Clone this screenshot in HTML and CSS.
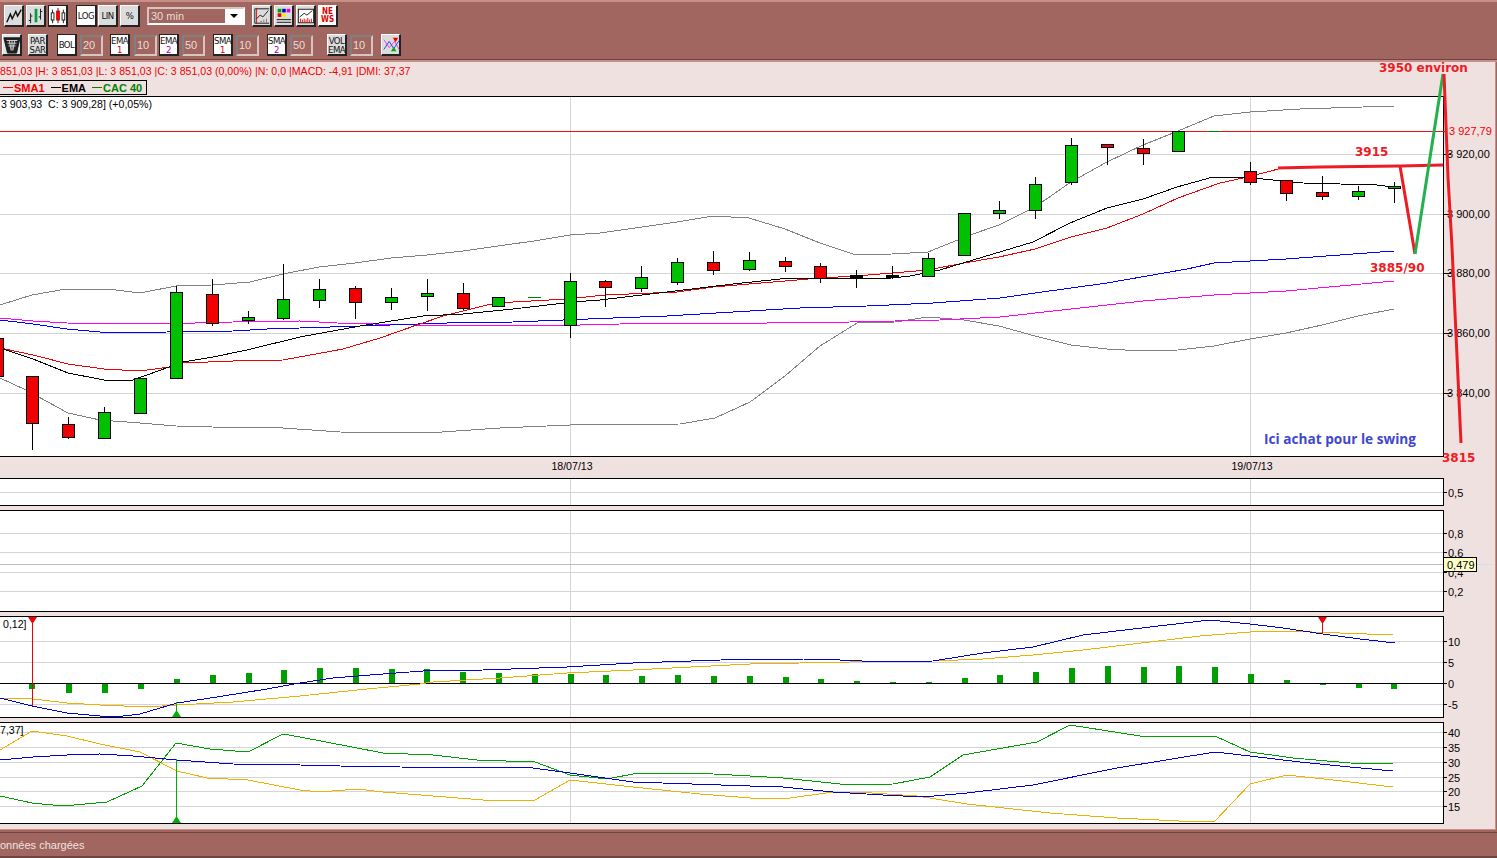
FILE: index.html
```html
<!DOCTYPE html>
<html lang="fr">
<head>
    <meta charset="UTF-8">
    <title>Graphique CAC 40</title>
    <link rel="stylesheet" href="styles.css">
</head>
<body>
    <div class="toolbar">
        <div class="tool-row">
            <button class="btn"><svg viewBox="0 0 20 20"><path d="M2 17 L6 8 L8 13 L12 5 L14 10 L18 3" class="ic-line"/></svg></button>
            <button class="btn g2"><svg viewBox="0 0 20 20"><path d="M4 7V18M2 15H4M4 10H6M15 2V14M13 11H15M15 5H17" class="ic-dark"/><path d="M10 2V17" class="ic-green"/></svg></button>
            <button class="btn on g2"><svg viewBox="0 0 20 20"><path d="M4 3V18M10 1V18M16 3V18" class="ic-dark"/><rect x="2.5" y="6.5" width="3" height="8" fill="#fff" stroke="#111"/><rect x="8.5" y="4.5" width="3" height="10" fill="#f00" stroke="#c00"/><rect x="14.5" y="6.5" width="3" height="8" fill="#fff" stroke="#111"/></svg></button>
            <button class="btn on wide g8">LOG</button>
            <button class="btn g1">LIN</button>
            <button class="btn g2">%</button>
            <div class="select">
                <span class="select-text">30 min</span>
                <span class="select-arrow"></span>
            </div>
            <button class="btn g7"><svg viewBox="0 0 20 20"><path d="M2 2H18M2 18H18M2 2V18" class="ic-dark"/><path d="M4 1V19" class="ic-red"/><path d="M4 13L8 9L11 11L17 4" class="ic-dark"/><path d="M8 16H10M12 14V17M15 13V17" class="ic-gray"/></svg></button>
            <button class="btn g2"><svg viewBox="0 0 20 20"><rect x="3" y="2" width="4" height="4" fill="#00a000"/><rect x="8" y="2" width="4" height="4" fill="#0000e0"/><rect x="13" y="2" width="4" height="4" fill="#e000e0"/><rect x="3" y="7" width="4" height="4" fill="#e00000"/><rect x="8" y="7" width="4" height="4" fill="#f0f000"/><rect x="13" y="7" width="4" height="4" fill="#e0e0e0"/><path d="M2 14H18M2 17H18" class="ic-dark"/></svg></button>
            <button class="btn g2"><svg viewBox="0 0 20 20"><rect x="1.5" y="2.5" width="17" height="15" fill="#fff" stroke="#111"/><path d="M3 11L8 7L11 9L17 4" class="ic-dark"/><path d="M4 17V13M6 17V14M8 17V13M10 17V14M12 17V12M14 17V14M16 17V13" class="ic-red"/></svg></button>
            <button class="btn news g2"><span>NE</span><span>WS</span></button>
        </div>
        <div class="tool-row second">
            <button class="btn trash"><svg viewBox="0 0 20 20"><path d="M1 2H19L15 19H5Z" fill="#222" stroke="#111"/><path d="M4 5H16M5 8H15M6 11H14M7 5L9 16M13 5L11 16M10 5V16" stroke="#ddd" fill="none"/></svg></button>
            <button class="btn two g6">PAR<br>SAR</button>
            <button class="btn on g9">BOL</button>
            <span class="num">20</span>
            <button class="btn on two g7">EMA<br><b class="red">1</b></button>
            <span class="num n4">10</span>
            <button class="btn on two g2">EMA<br><b class="violet">2</b></button>
            <span class="num">50</span>
            <button class="btn on two g8">SMA<br><b class="red">1</b></button>
            <span class="num">10</span>
            <button class="btn on two g8">SMA<br><b class="violet">2</b></button>
            <span class="num">50</span>
            <button class="btn two g14">VOL<br>EMA</button>
            <span class="num">10</span>
            <button class="btn g8"><svg viewBox="0 0 20 20"><path d="M2 4L8 13L14 6L19 15" class="ic-pink"/><path d="M2 15L8 6L13 14L19 5" class="ic-blue"/><path d="M10 17L13 12L16 17Z" fill="#0a0"/><path d="M12 2H18L15 7Z" fill="#e00"/></svg></button>
        </div>
    </div>

    <div class="main">
        <div class="info-line">851,03 |H: 3 851,03 |L: 3 851,03 |C: 3 851,03 (0,00%) |N: 0,0 |MACD: -4,91 |DMI: 37,37</div>
        <div class="legend">
            <span class="leg sma"><i></i>SMA1</span>
            <span class="leg ema"><i></i>EMA</span>
            <span class="leg cac"><i></i>CAC 40</span>
        </div>
        <div class="chart-wrap">
            <svg id="chart" width="1495" height="768" viewBox="0 62 1495 768"></svg>
        </div>
    </div>

    <div class="status">onnées chargées</div>

    <script src="chart.js"></script>
</body>
</html>
```

FILE: styles.css
```css
* {
    box-sizing: border-box;
}

body {
    margin: 0;
    width: 1497px;
    height: 858px;
    overflow: hidden;
    background-color: #a0665f;
    font-family: 'Liberation Sans', Arial, sans-serif;
    font-size: 11px;
    color: #000;
}

/* toolbars */
.toolbar {
    height: 62px;
    padding-top: 3px;
    background-color: #a0665f;
    border-top: 2px solid #c88f88;
    border-bottom: 2px solid #c88f88;
    box-shadow: inset 0 -1px 0 #6e4540;
}

.tool-row {
    display: flex;
    align-items: center;
    height: 22px;
    padding-left: 4px;
}

.tool-row.second {
    margin-top: 7px;
    padding-left: 2px;
}

.btn {
    width: 20px;
    height: 22px;
    margin: 0;
    padding: 0;
    flex: none;
    display: flex;
    flex-direction: column;
    align-items: center;
    justify-content: center;
    background-color: #dcdcdc;
    border: 1px solid #fff;
    border-right: 2px solid #222;
    border-bottom: 2px solid #222;
    font-family: 'DejaVu Sans', sans-serif;
    font-stretch: condensed;
    font-size: 9.5px;
    letter-spacing: -0.5px;
    line-height: 9px;
    color: #111;
}

.btn svg {
    width: 18px;
    height: 18px;
    flex: none;
}

.btn.on {
    background-color: #fff;
    border-top-color: #222;
    border-left-color: #222;
}

.btn.wide {
    width: 21px;
}

.btn.two {
    display: block;
    line-height: 9px;
    text-align: center;
}

.btn.two b {
    font-weight: normal;
    font-size: 9.5px;
    line-height: 8px;
}

.btn.news {
    color: #e00000;
    background-color: #fff;
    font-weight: bold;
    font-size: 8px;
    letter-spacing: 0;
    line-height: 8px;
}

.btn.trash {
    background-color: #e4e4e4;
}

.red {
    color: #e00000;
}

.violet {
    color: #a000c0;
}

.g1 { margin-left: 1px; }
.g2 { margin-left: 2px; }
.g6 { margin-left: 6px; }
.g7 { margin-left: 7px; }
.g8 { margin-left: 8px; }
.g9 { margin-left: 9px; }
.g14 { margin-left: 14px; }

.num {
    width: 23px;
    height: 21px;
    margin-left: 3px;
    padding-left: 1px;
    flex: none;
    border: 2px solid #d8c4c0;
    border-top-color: #808080;
    border-left-color: #808080;
    color: #e8dcd8;
    font-size: 11px;
    line-height: 17px;
}

.num.n4 {
    margin-left: 4px;
}

.select {
    display: flex;
    align-items: center;
    width: 98px;
    height: 18px;
    margin-left: 7px;
    flex: none;
    border: 2px solid #fff;
    border-top-color: #d8c4c0;
    border-left-color: #d8c4c0;
    color: #e8dcd8;
}

.select-text {
    flex: 1;
    padding-left: 2px;
    font-size: 11px;
}

.select-arrow {
    position: relative;
    width: 18px;
    height: 14px;
    background-color: #fff;
}

.select-arrow::after {
    content: '';
    position: absolute;
    left: 5px;
    top: 5px;
    border-left: 4px solid transparent;
    border-right: 4px solid transparent;
    border-top: 4px solid #000;
}

.ic-line, .ic-dark, .ic-green, .ic-red, .ic-gray, .ic-pink, .ic-blue {
    fill: none;
    stroke-width: 1;
}

.ic-line { stroke: #111; stroke-width: 1.6; }
.ic-dark { stroke: #111; }
.ic-green { stroke: #00a040; stroke-width: 3; }
.ic-red { stroke: #e00000; }
.ic-gray { stroke: #777; }
.ic-pink { stroke: #e040e0; }
.ic-blue { stroke: #2040d0; }

/* chart area */
.main {
    position: relative;
    width: 1496px;
    height: 768px;
    background-color: #f0e1e1;
    border-right: 1px solid #c88f88;
    border-bottom: 1px solid #c88f88;
}

.info-line {
    position: absolute;
    left: 0;
    top: 3px;
    color: #f00000;
    font-size: 10.6px;
    line-height: 13px;
    white-space: nowrap;
    z-index: 2;
}

.legend {
    position: absolute;
    left: -1px;
    top: 18px;
    width: 148px;
    height: 15px;
    padding-left: 3px;
    display: flex;
    align-items: center;
    gap: 6px;
    border: 1px solid #000;
    font-size: 11px;
    font-weight: bold;
    white-space: nowrap;
    z-index: 2;
}

.leg {
    display: flex;
    align-items: center;
    gap: 1px;
}

.leg i {
    display: block;
    width: 10px;
    height: 1px;
    background-color: currentColor;
}

.leg.sma { color: #f00000; }
.leg.ema { color: #000; }
.leg.cac { color: #008000; }

.chart-wrap {
    width: 1495px;
    height: 768px;
}

#chart {
    display: block;
}

.status {
    height: 26px;
    margin-top: 2px;
    border-top: 1px solid #6e4540;
    border-bottom: 2px solid #6e4540;
    color: #f0e4e0;
    font-size: 11px;
    line-height: 24px;
}

/* svg text */
.ax {
    font-family: 'Liberation Sans', Arial, sans-serif;
    font-size: 11px;
    fill: #000;
}

.ax-small {
    font-size: 10.6px;
}

.ax-red {
    fill: #f00000;
}

.note {
    font-family: 'DejaVu Sans', Verdana, sans-serif;
    font-weight: bold;
    font-size: 12px;
    fill: #ed1c24;
}

.note-blue {
    font-family: 'Open Sans', sans-serif;
    font-weight: 700;
    font-size: 13.65px;
    fill: #3f48cc;
}
```

FILE: chart.js
```js
// all chart pieces are drawn in page pixels, viewBox starts where the pink area starts
var svg = document.getElementById('chart');
var out = '';

var GRID = '#d4d4d4';
var RIGHT = 1443;

function line(x1, y1, x2, y2, color, w) {
    out += '<line x1="' + x1 + '" y1="' + y1 + '" x2="' + x2 + '" y2="' + y2 + '" stroke="' + color + '" stroke-width="' + (w || 1) + '"/>';
}

function rect(x, y, w, h, fill, stroke) {
    out += '<rect x="' + x + '" y="' + y + '" width="' + w + '" height="' + h + '" fill="' + fill + '"' + (stroke ? ' stroke="' + stroke + '"' : '') + '/>';
}

function poly(points, color, w) {
    var s = points.map(function (p) { return p[0] + ',' + p[1]; }).join(' ');
    out += '<polyline points="' + s + '" fill="none" stroke="' + color + '" stroke-width="' + (w || 1) + '" shape-rendering="' + (w ? 'auto' : 'crispEdges') + '"/>';
}

function text(x, y, str, cls, anchor) {
    out += '<text x="' + x + '" y="' + y + '" class="' + cls + '"' + (anchor ? ' text-anchor="' + anchor + '"' : '') + '>' + str + '</text>';
}

// one panel: white box, grid, vertical date lines, axis ticks + labels
function panel(top, bottom, grid, labels) {
    rect(-2, top + 0.5, RIGHT + 2.5, bottom - top, '#fff', '#000');
    grid.forEach(function (g) { line(0, g + 0.5, RIGHT, g + 0.5, GRID); });
    [570.5, 1250.5].forEach(function (x) { line(x, top + 1, x, bottom, GRID); });
    labels.forEach(function (l) {
        text(1448, l[0] + 4.5, l[1], 'ax');
        line(RIGHT, l[0] + 0.5, 1447, l[0] + 0.5, '#000');
    });
}

// main price chart
panel(96, 456, [154, 214, 273, 333, 393], []);
[[154, '3 920,00'], [214, '3 900,00'], [273, '3 880,00'], [333, '3 860,00'], [393, '3 840,00']].forEach(function (l) {
    text(1447, l[0] + 4, l[1], 'ax');
    line(RIGHT, l[0] + 0.5, 1451, l[0] + 0.5, '#000');
});
line(0, 131.5, RIGHT + 4, 131.5, '#e81010');
text(1449, 135, '3 927,79', 'ax ax-red');
line(1208, 131.5, 1220, 131.5, '#008000');

var bollUp = [[0, 305], [32, 295], [66, 289], [108, 289], [140, 293], [176, 286], [212, 285], [250, 282], [283, 274], [319, 267], [355, 263], [391, 258], [427, 255], [463, 251], [498, 246], [534, 241], [570, 235], [600, 233], [677, 222], [713, 216], [749, 218], [785, 229], [820, 243], [856, 255], [892, 254], [928, 252], [970, 235], [999, 225], [1035, 207], [1071, 182], [1107, 162], [1143, 145], [1178, 131], [1214, 116], [1250, 112], [1300, 109], [1394, 106]];
var bollLow = [[0, 378], [26, 390], [68, 413], [100, 420], [140, 423], [176, 426], [212, 427], [283, 428], [340, 432], [427, 433], [500, 428], [570, 425], [680, 424], [715, 418], [750, 402], [785, 376], [820, 346], [857, 323], [895, 322], [928, 317], [964, 320], [999, 326], [1035, 336], [1071, 345], [1107, 349], [1143, 351], [1178, 350], [1214, 346], [1250, 339], [1286, 333], [1322, 325], [1358, 316], [1394, 309]];
var magenta = [[0, 318], [33, 321], [67, 323], [157, 324], [233, 322], [300, 321], [337, 323], [413, 325], [580, 325], [620, 324], [767, 323], [850, 322], [940, 320], [1000, 317], [1071, 309], [1143, 301], [1214, 295], [1286, 291], [1394, 281]];
var blue = [[0, 320], [33, 324], [67, 329], [100, 332], [133, 333], [167, 332], [233, 331], [267, 329], [300, 328], [390, 325], [447, 323], [513, 322], [563, 320], [613, 318], [667, 316], [733, 312], [800, 308], [867, 306], [933, 303], [1000, 298], [1035, 293], [1107, 283], [1187, 269], [1214, 263], [1286, 259], [1394, 251]];
var sma = [[0, 348], [33, 355], [68, 364], [104, 369], [140, 371], [170, 367], [183, 363], [233, 361], [283, 360], [343, 349], [380, 338], [417, 325], [443, 316], [487, 305], [513, 302], [567, 299], [605, 295], [677, 292], [713, 287], [749, 284], [785, 281], [820, 278], [856, 276], [892, 273], [928, 270], [964, 263], [999, 257], [1035, 249], [1071, 237], [1107, 228], [1143, 214], [1178, 198], [1220, 183], [1243, 178], [1267, 172], [1282, 168]];
var ema = [[0, 348], [33, 359], [68, 373], [104, 380], [133, 380], [183, 362], [213, 357], [247, 350], [300, 337], [360, 326], [423, 316], [463, 314], [513, 309], [573, 302], [600, 300], [667, 292], [733, 284], [780, 279], [893, 278], [910, 276], [940, 270], [963, 263], [1033, 242], [1070, 223], [1107, 208], [1143, 199], [1177, 187], [1213, 177], [1243, 177], [1303, 183], [1340, 184], [1377, 185], [1393, 187]];

poly(bollUp, '#808080');
poly(bollLow, '#808080');
poly(magenta, '#ff00ff');
poly(blue, '#0000ff');
poly(sma, '#f00000');
poly(ema, '#000000');

// x, high, top, bottom, low, color (g/r)
var candles = [
    [-3, 338, 338, 376, 376, 'r'], [32, 376, 376, 423, 450, 'r'], [68, 417, 424, 437, 439, 'r'], [104, 407, 412, 438, 438, 'g'],
    [140, 378, 378, 413, 413, 'g'], [176, 286, 292, 378, 378, 'g'], [212, 279, 294, 323, 326, 'r'], [248, 311, 317, 320, 324, 'g'],
    [283, 264, 299, 318, 320, 'g'], [319, 279, 289, 300, 308, 'g'], [355, 286, 288, 302, 319, 'r'], [391, 288, 297, 302, 310, 'g'],
    [427, 279, 293, 296, 311, 'g'], [463, 283, 293, 308, 310, 'r'], [498, 297, 297, 306, 306, 'g'], [570, 273, 281, 325, 338, 'g'],
    [605, 280, 281, 287, 307, 'r'], [641, 266, 277, 288, 292, 'g'], [677, 258, 262, 282, 285, 'g'], [713, 251, 262, 270, 275, 'r'],
    [749, 252, 260, 269, 271, 'g'], [785, 257, 261, 266, 272, 'r'], [820, 263, 266, 278, 283, 'r'], [856, 270, 275, 277, 288, 'k'],
    [892, 266, 275, 277, 279, 'k'], [928, 253, 258, 276, 277, 'g'], [964, 213, 213, 255, 256, 'g'], [999, 201, 210, 213, 219, 'g'],
    [1035, 177, 184, 210, 219, 'g'], [1071, 138, 145, 182, 185, 'g'], [1107, 144, 144, 147, 165, 'r'], [1143, 139, 148, 153, 165, 'r'],
    [1178, 131, 131, 151, 151, 'g'], [1250, 162, 171, 182, 185, 'r'], [1286, 180, 180, 193, 201, 'r'], [1322, 176, 192, 196, 200, 'r'],
    [1358, 186, 191, 196, 200, 'g'], [1394, 182, 186, 188, 203, 'g']
];
var fills = { g: '#00c000', r: '#f00000', k: '#000' };
candles.forEach(function (c) {
    line(c[0] + 0.5, c[1], c[0] + 0.5, c[4], '#000');
    rect(c[0] - 5.5, c[2] + 0.5, 12, c[3] - c[2], fills[c[5]], '#000');
});
line(528, 297.5, 541, 297.5, '#008000');

text(1264, 444, 'Ici achat pour le swing', 'note-blue');

// dates under the main chart
text(572, 470, '18/07/13', 'ax ax-small', 'middle');
text(1252, 470, '19/07/13', 'ax ax-small', 'middle');

// empty panels
panel(478, 505, [492], [[492, '0,5']]);
panel(510, 611, [533, 552, 572, 591], [[533, '0,8'], [552, '0,6'], [572, '0,4'], [591, '0,2']]);
line(0, 564.5, RIGHT, 564.5, '#bcbcbc');
line(RIGHT, 564.5, 1493, 564.5, '#cfe0e0');
rect(1443.5, 557.5, 33, 14, '#ffffc8', '#000');
text(1447, 569, '0,479', 'ax');

// MACD
panel(616, 717, [641, 662, 704], [[641, '10'], [662, '5'], [683, '0'], [704, '-5']]);
var hist = [[32, 689], [69, 693], [105, 693], [141, 689], [177, 679], [213, 675], [249, 673], [284, 670], [320, 668], [356, 668], [392, 669], [427, 669], [463, 672], [499, 673], [535, 674], [571, 674], [606, 675], [642, 676], [678, 675], [714, 676], [750, 676], [786, 677], [821, 679], [857, 681], [893, 682], [929, 682], [965, 678], [1000, 675], [1036, 672], [1072, 668], [1108, 666], [1144, 667], [1179, 666], [1215, 667], [1251, 674], [1287, 680], [1323, 685], [1359, 688], [1394, 689]];
hist.forEach(function (h) {
    rect(h[0] - 3, Math.min(h[1], 683), 6, Math.abs(h[1] - 683), '#009e00');
});
line(0, 683.5, RIGHT, 683.5, '#000');
var macdSig = [[0, 698], [33, 699], [67, 703], [100, 705], [147, 707], [177, 705], [233, 702], [300, 696], [367, 689], [420, 684], [433, 682], [500, 678], [567, 673], [633, 670], [750, 664], [850, 662], [933, 661], [983, 659], [1033, 655], [1083, 650], [1200, 636], [1250, 632], [1283, 631], [1340, 633], [1393, 635]];
var macd = [[0, 698], [32, 706], [67, 713], [100, 716], [115, 717], [140, 714], [177, 703], [217, 697], [267, 689], [300, 683], [333, 678], [383, 674], [423, 671], [483, 670], [567, 667], [633, 663], [750, 659], [803, 659], [840, 660], [883, 662], [933, 661], [983, 653], [1033, 647], [1083, 635], [1150, 627], [1210, 620], [1250, 624], [1283, 628], [1323, 634], [1360, 639], [1395, 643]];
poly(macdSig, '#f0b000');
poly(macd, '#0000d0');

line(32.5, 617, 32.5, 706, '#f00000');
out += '<polygon points="28,617 37,617 32.5,624" fill="#f00000"/>';
line(1322.5, 617, 1322.5, 634, '#f00000');
out += '<polygon points="1318,617 1327,617 1322.5,624" fill="#f00000"/>';
line(176.5, 702, 176.5, 717, '#00b000');
out += '<polygon points="172,717 181,717 176.5,710" fill="#00b000"/>';

// DMI
panel(722, 823, [732, 747, 762, 777, 791, 806], [[732, '40'], [747, '35'], [762, '30'], [777, '25'], [791, '20'], [806, '15']]);
var dmiOrange = [[0, 750], [32, 731], [67, 736], [100, 744], [140, 752], [177, 771], [207, 778], [248, 780], [300, 790], [320, 792], [357, 789], [383, 792], [433, 796], [483, 800], [535, 800], [570, 780], [633, 787], [700, 794], [750, 798], [783, 799], [833, 792], [857, 792], [917, 796], [967, 804], [1050, 813], [1117, 818], [1200, 822], [1215, 821], [1250, 784], [1287, 775], [1333, 780], [1393, 787]];
var dmiGreen = [[0, 796], [32, 803], [63, 806], [107, 802], [142, 786], [176, 743], [210, 749], [248, 752], [283, 734], [300, 737], [383, 753], [433, 755], [477, 760], [535, 762], [570, 775], [607, 779], [638, 773], [695, 773], [750, 776], [783, 778], [850, 785], [893, 784], [930, 777], [963, 755], [1037, 742], [1070, 725], [1140, 736], [1215, 736], [1250, 752], [1293, 758], [1350, 763], [1393, 764]];
var dmiBlue = [[0, 760], [33, 757], [67, 755], [100, 754], [133, 756], [177, 760], [233, 764], [300, 765], [340, 766], [400, 767], [533, 768], [570, 773], [633, 782], [750, 786], [783, 787], [833, 792], [883, 795], [923, 797], [967, 793], [1033, 785], [1117, 768], [1215, 752], [1250, 756], [1300, 762], [1350, 767], [1393, 771]];
poly(dmiOrange, '#f0b000');
poly(dmiGreen, '#009e00');
poly(dmiBlue, '#0000d0');
line(176.5, 759, 176.5, 823, '#00b000');
out += '<polygon points="172,823 181,823 176.5,816" fill="#00b000"/>';

// hand drawn notes on top of the picture
var P = '#ed1c24';
poly([[1278, 168], [1320, 167], [1400, 166], [1443, 165]], P, 3);
poly([[1400, 166], [1415, 254]], P, 3);
poly([[1415, 254], [1443, 74]], '#22b14c', 3);
poly([[1444, 74], [1448, 177], [1452, 247], [1461, 443]], P, 3);
text(1379, 72, '3950 environ', 'note');
text(1355, 156, '3915', 'note');
text(1370, 272, '3885/90', 'note');
text(1442, 462, '3815', 'note');

text(3, 628, '0,12]', 'ax ax-small');
text(0, 734, '7,37]', 'ax ax-small');
text(1, 108, '3 903,93 &#160;C: 3 909,28] (+0,05%)', 'ax ax-small');

svg.innerHTML = out;
```
